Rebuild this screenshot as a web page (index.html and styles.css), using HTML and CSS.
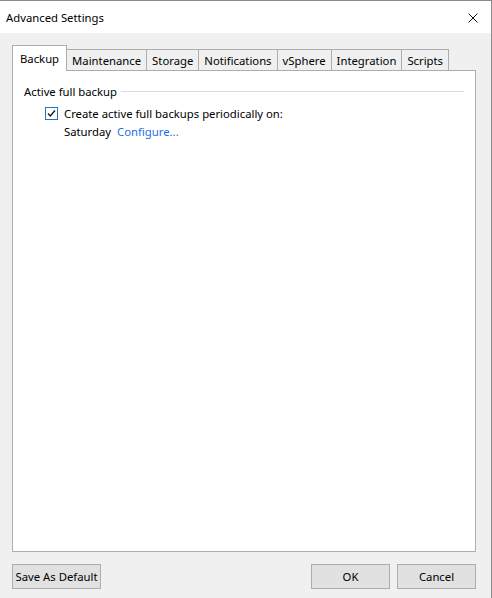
FILE: index.html
```html
<!DOCTYPE html>
<html lang="en">
<head>
  <meta charset="UTF-8">
  <title>Advanced Settings</title>
  <link rel="stylesheet" href="styles.css">
</head>
<body>

<div class="window">
  <div class="titlebar">
    <span class="title">Advanced Settings</span>
    <svg class="close" width="10" height="10" viewBox="0 0 10 10">
      <path d="M0.5 0.5 L9.5 9.5 M9.5 0.5 L0.5 9.5" stroke="#111" stroke-width="1" fill="none"/>
    </svg>
  </div>

  <div class="client">
    <div class="tabs">
      <div class="tab active">Backup</div>
      <div class="tab">Maintenance</div>
      <div class="tab">Storage</div>
      <div class="tab">Notifications</div>
      <div class="tab">vSphere</div>
      <div class="tab">Integration</div>
      <div class="tab">Scripts</div>
    </div>

    <div class="panel">
      <div class="group-head">
        <span>Active full backup</span>
        <span class="rule"></span>
      </div>
      <div class="check-row">
        <span class="checkbox">
          <svg width="11" height="11" viewBox="0 0 11 11">
            <path d="M2 5.5 L4.3 8 L9 2.5" stroke="#1a1a1a" stroke-width="1.4" fill="none"/>
          </svg>
        </span>
        <span>Create active full backups periodically on:</span>
      </div>
      <div class="sched-row">
        <span>Saturday</span>
        <a href="#" class="link">Configure...</a>
      </div>
    </div>

    <div class="buttons">
      <button class="btn btn-wide">Save As Default</button>
      <div class="spacer"></div>
      <button class="btn">OK</button>
      <button class="btn">Cancel</button>
    </div>
  </div>
</div>

</body>
</html>
```

FILE: styles.css
```css
html, body {
  margin: 0;
  padding: 0;
  background: #f0f0f0;
  font-family: "Noto Sans", "Open Sans", sans-serif;
  font-size: 11.3px;
  color: #000;
}
.window {
  width: 491px;
  height: 597px;
  border-top: 1px solid #8a8a8a;
  border-right: 1px solid #8a8a8a;
  background: #f0f0f0;
  display: flex;
  flex-direction: column;
}
.titlebar {
  height: 32px;
  background: #fff;
  display: flex;
  align-items: center;
  padding: 0 12px 0 6px;
}
.title {
  flex: 1;
  margin-top: 1px;
}
.close {
  margin-right: 1px;
  margin-top: 1px;
}
.client {
  flex: 1;
  display: flex;
  flex-direction: column;
  padding: 13px 15px 9px 12px;
}
.tabs {
  display: flex;
  align-items: flex-end;
  height: 24px;
  position: relative;
  z-index: 1;
}
.tab {
  height: 20px;
  line-height: 21px;
  padding: 0 5px;
  border: 1px solid #adadad;
  border-bottom: none;
  border-left: none;
  background: #f0f0f0;
  color: #000;
  white-space: nowrap;
}
.tab.active {
  height: 25px;
  line-height: 25px;
  margin-bottom: -1px;
  padding: 0 7px 0 7px;
  border-left: 1px solid #adadad;
  background: #fff;
}
.panel {
  flex: 1;
  background: #fff;
  border: 1px solid #adadad;
  padding: 11px 11px 0 11px;
}
.group-head {
  display: flex;
  align-items: center;
  gap: 4px;
  height: 18px;
}
.group-head .rule {
  flex: 1;
  height: 1px;
  background: #dcdcdc;
}
.check-row {
  display: flex;
  align-items: center;
  gap: 6px;
  margin-top: 4px;
  padding-left: 21px;
  height: 18px;
}
.checkbox {
  width: 11px;
  height: 11px;
  border: 1px solid #1f74c2;
  display: flex;
  align-items: center;
  justify-content: center;
}
.sched-row {
  display: flex;
  gap: 6px;
  padding-left: 40px;
  height: 18px;
  align-items: center;
}
.link {
  color: #1a6fe8;
  text-decoration: none;
}
.buttons {
  display: flex;
  gap: 7px;
  margin-top: 12px;
}
.spacer {
  flex: 1;
}
.btn {
  height: 25px;
  width: 79px;
  border: 1px solid #adadad;
  background: #e1e1e1;
  font-family: inherit;
  font-size: 11.3px;
  color: #000;
  padding: 0;
  white-space: nowrap;
}
.btn-wide {
  width: 89px;
}
```
